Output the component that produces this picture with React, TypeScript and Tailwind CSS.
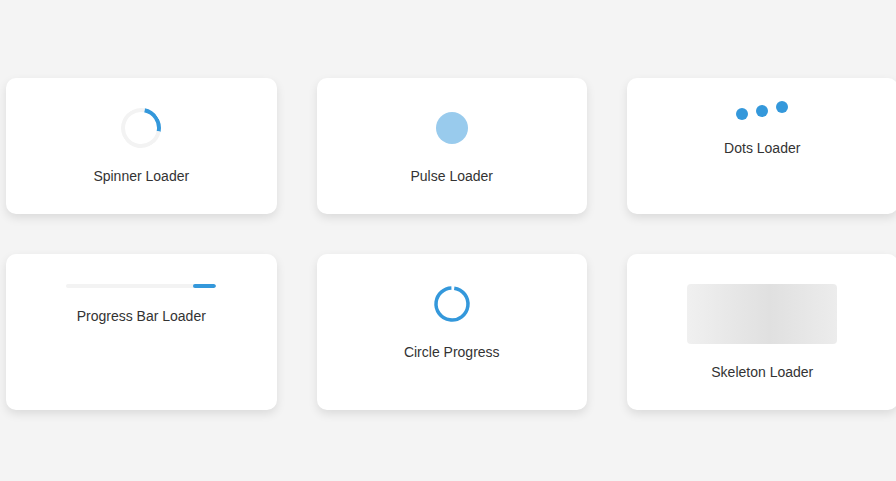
import React from "react";

function Card({children, label}: {children: React.ReactNode; label: string}) {
    return (
        <div className="bg-white rounded-[10px] shadow-[0_4px_10px_rgba(0,0,0,0.1)] p-[30px] flex flex-col items-center">
            {children}
            <p className="mt-5 text-[14px] leading-[16px] text-[#333]">{label}</p>
        </div>
    )
}

export default function App() {
    return (
        <div className="min-h-screen bg-[#f4f4f4] pt-[78px] pl-[6px] overflow-hidden" style={{fontFamily: '"Liberation Sans", Arial, sans-serif'}}>
            <div className="grid grid-cols-[repeat(3,270.5px)] gap-x-[40px] gap-y-[40px] w-max">
                <Card label="Spinner Loader">
                    <div className="w-10 h-10 rounded-full border-4 border-[#f3f3f3] border-t-[#3498db] rotate-[56deg]"/>
                </Card>
                <Card label="Pulse Loader">
                    <div className="w-10 h-10 flex items-center justify-center">
                        <div className="w-8 h-8 rounded-full bg-[#3498db] opacity-50"/>
                    </div>
                </Card>
                <Card label="Dots Loader">
                    <div className="h-3 flex gap-2">
                        <div className="w-3 h-3 rounded-full bg-[#3498db]"/>
                        <div className="w-3 h-3 rounded-full bg-[#3498db] -translate-y-[3px]"/>
                        <div className="w-3 h-3 rounded-full bg-[#3498db] -translate-y-[7px]"/>
                    </div>
                </Card>
                <Card label="Progress Bar Loader">
                    <div className="w-[150px] h-1 bg-[#f3f3f3] rounded-sm overflow-hidden flex justify-end">
                        <div className="w-[23px] h-full bg-[#3498db] rounded-sm"/>
                    </div>
                </Card>
                <Card label="Circle Progress">
                    <svg width="40" height="40" viewBox="0 0 40 40">
                        <circle cx="20" cy="20" r="16" fill="none" stroke="#3498db" strokeWidth="3.5"
                                strokeDasharray="97 3.5" transform="rotate(-82 20 20)"/>
                    </svg>
                </Card>
                <Card label="Skeleton Loader">
                    <div className="w-[150px] h-[60px] rounded bg-[linear-gradient(90deg,#f0f0f0_0%,#e0e0e0_55%,#ececec_100%)]"/>
                </Card>
            </div>
        </div>
    )
}
